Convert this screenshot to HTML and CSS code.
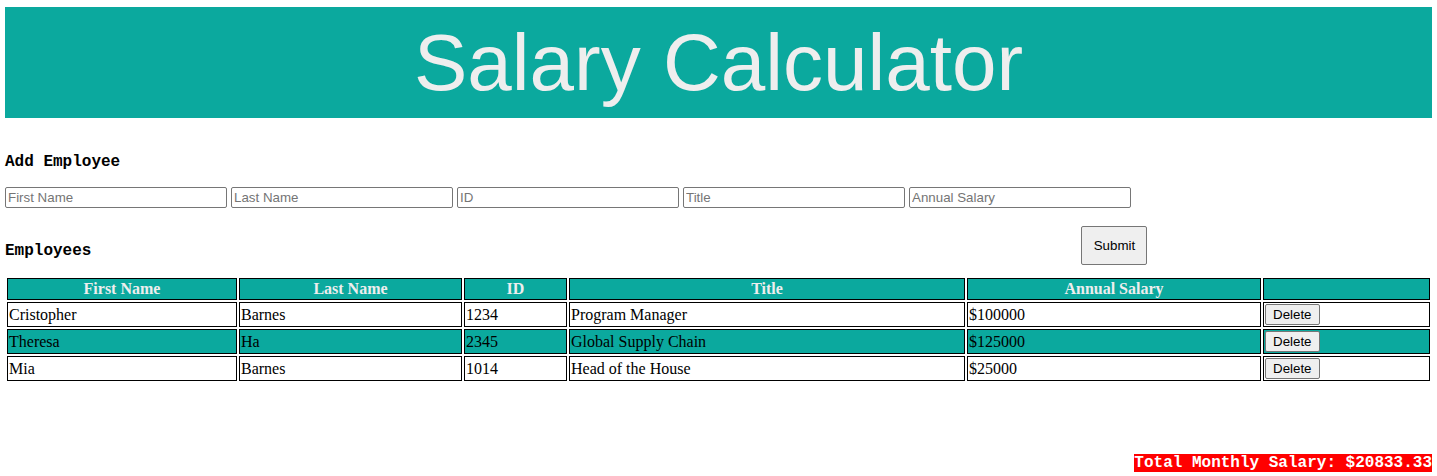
FILE: index.html
```html
<!DOCTYPE html>
<html lang="en">
<head>
<meta charset="utf-8">
<title>Salary Calculator</title>
<link rel="stylesheet" href="styles.css">
</head>
<body>
<header class="banner">
  <h1 class="banner-title">Salary Calculator</h1>
</header>
<section class="form">
  <h2 class="section-label label-add">Add Employee</h2>
  <div class="inputs">
    <input class="field" type="text" placeholder="First Name">
    <input class="field" type="text" placeholder="Last Name">
    <input class="field" type="text" placeholder="ID">
    <input class="field" type="text" placeholder="Title">
    <input class="field" type="text" placeholder="Annual Salary">
  </div>
  <div class="bar">
    <h2 class="section-label label-emp">Employees</h2>
    <button class="submit" type="button">Submit</button>
  </div>
</section>
<table class="employees">
  <colgroup>
    <col class="c-first">
    <col class="c-last">
    <col class="c-id">
    <col class="c-title">
    <col class="c-salary">
    <col class="c-action">
  </colgroup>
  <thead>
    <tr>
      <th>First Name</th>
      <th>Last Name</th>
      <th>ID</th>
      <th>Title</th>
      <th>Annual Salary</th>
      <th></th>
    </tr>
  </thead>
  <tbody>
    <tr>
      <td>Cristopher</td>
      <td>Barnes</td>
      <td>1234</td>
      <td>Program Manager</td>
      <td>$100000</td>
      <td><button class="delete" type="button">Delete</button></td>
    </tr>
    <tr class="alt">
      <td>Theresa</td>
      <td>Ha</td>
      <td>2345</td>
      <td>Global Supply Chain</td>
      <td>$125000</td>
      <td><button class="delete" type="button">Delete</button></td>
    </tr>
    <tr>
      <td>Mia</td>
      <td>Barnes</td>
      <td>1014</td>
      <td>Head of the House</td>
      <td>$25000</td>
      <td><button class="delete" type="button">Delete</button></td>
    </tr>
  </tbody>
</table>
<footer class="total-row">
  <span class="total">Total Monthly Salary: $20833.33</span>
</footer>
</body>
</html>
```
FILE: styles.css
```css
html, body {
  margin: 0;
  padding: 0;
  background: #ffffff;
}

body {
  padding: 7px 5px 5px 5px;
  font-family: "Liberation Serif", "Times New Roman", serif;
  font-size: 16px;
  color: #000;
}

.banner {
  background: #0ba99e;
  height: 111px;
}

.banner-title {
  margin: 0;
  font-family: "Liberation Sans", Arial, sans-serif;
  font-weight: normal;
  font-size: 80px;
  line-height: 111px;
  text-align: center;
  color: #eeeeee;
}

.form {
  display: flex;
  flex-direction: column;
}

.section-label {
  margin: 0;
  font-family: "Liberation Mono", "Courier New", monospace;
  font-size: 16px;
  font-weight: bold;
  line-height: 18px;
}

.label-add {
  margin-top: 35px;
}

.inputs {
  display: flex;
  gap: 4px;
  margin-top: 16px;
}

.field {
  box-sizing: border-box;
  width: 222px;
  height: 21px;
  margin: 0;
  padding: 1px 2px;
  font-family: "Liberation Sans", Arial, sans-serif;
  font-size: 13.333px;
  border: 1px solid #767676;
  border-radius: 2px;
}

.field::placeholder {
  color: #757575;
}

.bar {
  display: flex;
  align-items: flex-start;
  margin-top: 18px;
}

.label-emp {
  margin-top: 16px;
}

.submit {
  box-sizing: border-box;
  margin: 0 0 0 990px;
  width: 66px;
  height: 39px;
  padding: 0;
  font-family: "Liberation Sans", Arial, sans-serif;
  font-size: 13.333px;
  color: #000;
  background: #efefef;
  border: 1px solid #767676;
  border-radius: 2px;
}

.employees {
  margin-top: 11px;
  width: 100%;
  table-layout: fixed;
  border-collapse: separate;
  border-spacing: 2px;
}

.c-first { width: 230px; }
.c-last { width: 223px; }
.c-id { width: 103px; }
.c-title { width: 396px; }
.c-salary { width: 294px; }
.c-action { width: 167px; }

.employees th,
.employees td {
  border: 1px solid #000;
  padding: 1px;
  font-size: 16px;
  line-height: 18px;
}

.employees th {
  background: #0ba99e;
  color: #eeeeee;
  font-weight: bold;
  text-align: center;
}

.employees td {
  text-align: left;
  height: 21px;
  vertical-align: middle;
}

.employees tr.alt td {
  background: #0ba99e;
}

.delete {
  box-sizing: border-box;
  height: 21px;
  margin: 0;
  padding: 1px 7px;
  font-family: "Liberation Sans", Arial, sans-serif;
  font-size: 13.333px;
  color: #000;
  background: #efefef;
  border: 1px solid #767676;
  border-radius: 2px;
  vertical-align: middle;
}

.total-row {
  display: flex;
  justify-content: flex-end;
  margin-top: 71px;
}

.total {
  background: #ff0000;
  color: #ffffff;
  font-family: "Liberation Mono", "Courier New", monospace;
  font-size: 16px;
  font-weight: bold;
  line-height: 18px;
}
```
